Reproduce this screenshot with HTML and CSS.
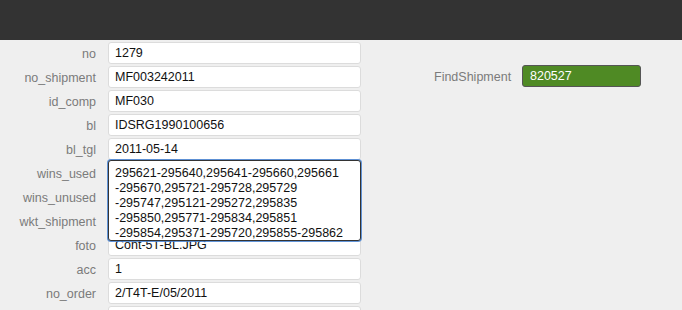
FILE: index.html
```html
<!DOCTYPE html>
<html>
<head>
<meta charset="utf-8">
<link rel="stylesheet" href="styles.css">
</head>
<body>
<header class="topbar"></header>
<main class="page">
  <form class="form">
    <label class="lbl">no</label><input class="field" value="1279">
    <label class="lbl">no_shipment</label><input class="field" value="MF003242011">
    <label class="lbl">id_comp</label><input class="field" value="MF030">
    <label class="lbl">bl</label><input class="field" value="IDSRG1990100656">
    <label class="lbl">bl_tgl</label><input class="field" value="2011-05-14">
    <label class="lbl">wins_used</label>
    <div class="cell">
      <input class="field" value="295621-295640,295641-295660">
      <textarea class="expanded">295621-295640,295641-295660,295661
-295670,295721-295728,295729
-295747,295121-295272,295835
-295850,295771-295834,295851
-295854,295371-295720,295855-295862</textarea>
    </div>
    <label class="lbl">wins_unused</label><input class="field" value="">
    <label class="lbl">wkt_shipment</label><input class="field" value="">
    <label class="lbl">foto</label><input class="field" value="Cont-5T-BL.JPG">
    <label class="lbl">acc</label><input class="field" value="1">
    <label class="lbl">no_order</label><input class="field" value="2/T4T-E/05/2011">
    <label class="lbl"></label><input class="field" value="">
  </form>
  <div class="finder">
    <label class="lbl">FindShipment</label>
    <input class="field green" value="820527">
  </div>
</main>
</body>
</html>
```
FILE: styles.css
```css
html, body {
  margin: 0;
  padding: 0;
  background: #efefef;
  font-family: "Liberation Sans", Arial, sans-serif;
  font-size: 12.5px;
  overflow: hidden;
}
.topbar {
  height: 40px;
  background: #333333;
}
.page {
  display: flex;
  align-items: flex-start;
  padding-top: 2px;
}
.form {
  display: grid;
  grid-template-columns: 96px 253px;
  grid-auto-rows: 22px;
  column-gap: 12px;
  row-gap: 2px;
  margin: 0;
}
.lbl {
  color: #7b7b7b;
  text-align: right;
  align-self: center;
  white-space: nowrap;
  padding-top: 1px;
}
.field {
  box-sizing: border-box;
  width: 100%;
  height: 22px;
  margin: 0;
  border: 1px solid #dcdcdc;
  border-radius: 3px;
  background: #fff;
  padding: 0 6px;
  font-family: "Liberation Sans", Arial, sans-serif;
  font-size: 12.5px;
  color: #111;
  outline: none;
}
.cell {
  position: relative;
}
.expanded {
  position: absolute;
  left: 0;
  top: -2px;
  z-index: 2;
  box-sizing: border-box;
  width: 253px;
  height: 81px;
  margin: 0;
  padding: 5px 6px 3px;
  border: 1px solid #333;
  border-radius: 3px;
  box-shadow: 0 0 0 1px rgba(70, 130, 210, 0.85);
  background: #fff;
  font-family: "Liberation Sans", Arial, sans-serif;
  font-size: 12.5px;
  line-height: 15px;
  color: #111;
  resize: none;
  overflow: hidden;
  outline: none;
}
.finder {
  display: flex;
  align-items: center;
  gap: 11px;
  margin-left: 73px;
  margin-top: 23px;
}
.finder .lbl {
  width: 77px;
}
.green {
  width: 119px;
  background: #4f8a24;
  border: 1px solid #555;
  color: #fff;
  padding-left: 7px;
}
```
